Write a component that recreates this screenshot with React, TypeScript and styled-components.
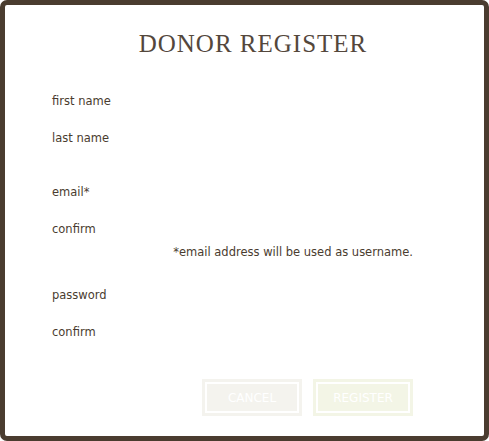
import React from "react";
import styled, { createGlobalStyle } from "styled-components";

const Global = createGlobalStyle`
  html, body { margin: 0; padding: 0; background: #ffffff; }
  #root { width: 489px; height: 441px; }
`;

const Frame = styled.div`
  box-sizing: border-box;
  width: 489px;
  height: 441px;
  border: 5px solid #4a3c2f;
  border-radius: 7px;
  background: #ffffff;
  display: flex;
  flex-direction: column;
  color: #4a3c2f;
  font-family: "DejaVu Sans", "Liberation Sans", sans-serif;
`;

const Title = styled.h1`
  margin: 24px 0 0;
  padding-left: 17px;
  height: 30px;
  line-height: 30px;
  text-align: center;
  font-family: "Liberation Serif", "DejaVu Serif", serif;
  font-weight: 400;
  font-size: 25px;
  letter-spacing: 1px;
  color: #54473c;
`;

const Form = styled.form`
  display: flex;
  flex-direction: column;
  padding: 0 71px 0 47px;
`;

const Group = styled.div<{ $top: number }>`
  display: flex;
  flex-direction: column;
  margin-top: ${(p) => p.$top}px;
`;

const Row = styled.div`
  height: 37px;
  display: flex;
  align-items: center;
`;

const Label = styled.label`
  font-size: 11.5px;
  line-height: 14px;
  color: #4a3c2f;
`;

const Note = styled.p`
  margin: -2px 0 0;
  height: 14px;
  line-height: 14px;
  font-size: 11.5px;
  text-align: right;
  color: #4a3c2f;
`;

const Actions = styled.div`
  display: flex;
  justify-content: flex-end;
  gap: 11px;
  margin-top: 29px;
`;

const Button = styled.button<{ $tone: string }>`
  box-sizing: border-box;
  width: 100px;
  height: 37px;
  border: 3px solid ${(p) => p.$tone};
  padding: 2px;
  background: ${(p) => p.$tone};
  background-clip: content-box;
  color: #ffffff;
  font-family: "DejaVu Sans", "Liberation Sans", sans-serif;
  font-size: 12px;
  text-transform: uppercase;
  cursor: default;
  outline: none;
  box-shadow: inset 0 0 0 2px #ffffff;
`;

export default function App() {
  return (
    <>
      <Global />
      <Frame>
        <Title>DONOR REGISTER</Title>
        <Form onSubmit={(e) => e.preventDefault()}>
          <Group $top={23}>
            <Row><Label>first name</Label></Row>
            <Row><Label>last name</Label></Row>
          </Group>
          <Group $top={17}>
            <Row><Label>email*</Label></Row>
            <Row><Label>confirm</Label></Row>
            <Note>*email address will be used as username.</Note>
          </Group>
          <Group $top={17}>
            <Row><Label>password</Label></Row>
            <Row><Label>confirm</Label></Row>
          </Group>
          <Actions>
            <Button type="button" $tone="#f4f3ee">Cancel</Button>
            <Button type="button" $tone="#f3f5e6">Register</Button>
          </Actions>
        </Form>
      </Frame>
    </>
  );
}
